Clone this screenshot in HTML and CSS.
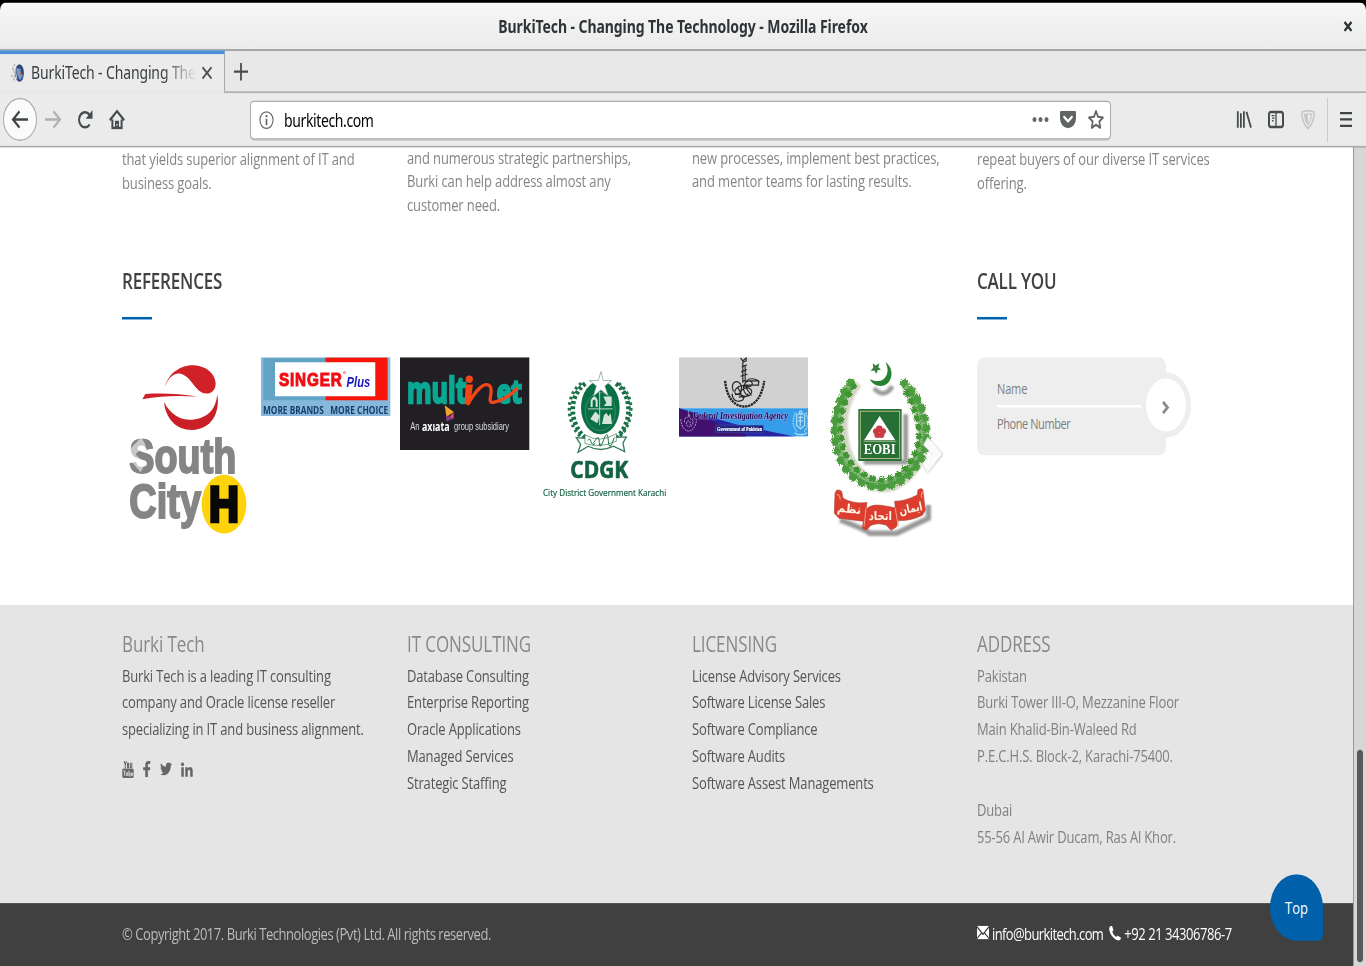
FILE: index.html
```html
<!DOCTYPE html>
<html lang="en">
<head>
<meta charset="utf-8">
<title>BurkiTech - Changing The Technology</title>
<link rel="stylesheet" href="styles.css">
</head>
<body>
<div class="screen">
  <header class="titlebar"><span class="window-title">BurkiTech - Changing The Technology - Mozilla Firefox</span>
    <svg class="window-close" width="10" height="10" viewBox="0 0 10 10"><path d="M1.500 1.500l7 7M8.500 1.500l-7 7" stroke="#2e3436" stroke-width="2.100"/></svg>
  </header>
  <div class="tabbar">
    <div class="tab">
      <svg class="favicon" width="16" height="16" viewBox="0 0 16 16"><path d="M5 1Q2 4 4 7T3 15M2 5l3 1M1 10l4 1" fill="none" stroke="#bbb" stroke-width="1.500" stroke-dasharray="2 1"/><ellipse cx="9.500" cy="8" rx="4.400" ry="7" fill="#34477d"/><path d="M7 4l4 1-1 3 3 2-3 4-3-5z" fill="#6d9bc7"/><path d="M10 7l2 1-2 2z" fill="#ba6e4d"/><path d="M6 4Q5 8 7 13" stroke="#c9ccd6" fill="none"/></svg>
      <span class="tab-label">BurkiTech - Changing The</span>
      <svg class="tab-close" width="12" height="12" viewBox="0 0 12 12"><path d="M1.500 1.500l9 9M10.500 1.500l-9 9" stroke="#4c5254" stroke-width="1.700"/></svg>
    </div>
    <svg class="new-tab" width="16" height="16" viewBox="0 0 16 16"><path d="M8 1v14M1 8h14" stroke="#454c4e" stroke-width="1.800"/></svg>
  </div>
  <div class="toolbar">
    <div class="nav">
      <span class="back"><svg width="18" height="16" viewBox="0 0 18 16"><path d="M17 8H2M8.500 1.500L2 8l6.500 6.500" fill="none" stroke="#3f4648" stroke-width="2"/></svg></span>
      <svg class="forward" width="18" height="16" viewBox="0 0 18 16"><path d="M1 8h15M9.500 1.500L16 8l-6.500 6.500" fill="none" stroke="#afb1b2" stroke-width="2"/></svg>
      <svg class="reload" width="16" height="16" viewBox="0 0 16 16"><path d="M12.700 12A6 6 0 1 1 12.700 4.500" fill="none" stroke="#464d4f" stroke-width="2"/><path d="M15.500 .5v7H8.800z" fill="#464d4f"/></svg>
      <svg class="home" width="16" height="16" viewBox="0 0 16 16"><path d="M.8 8.600L8 1.400l7.200 7.200M3.400 8v6.700h9.200V8" fill="none" stroke="#464d4f" stroke-width="2"/><path d="M6 15V9h4v6z" fill="#464d4f"/><path d="M8 11.500v1.500" stroke="#eee"/></svg>
    </div>
    <div class="urlbar">
      <svg width="15" height="15" viewBox="0 0 15 15"><circle cx="7.500" cy="7.500" r="6.600" fill="none" stroke="#666" stroke-width="1.100"/><path d="M7.500 6.500v5M7.500 3.500v1.800" stroke="#666" stroke-width="1.700"/></svg>
      <span class="url">burkitech.com</span>
      <svg class="dots" width="17" height="6" viewBox="0 0 17 6"><g fill="#666"><circle cx="2.500" cy="3" r="2"/><circle cx="8.500" cy="3" r="2"/><circle cx="14.500" cy="3" r="2"/></g></svg>
      <svg class="pocket" width="16" height="15" viewBox="0 0 16 15"><path d="M1.500 0h13Q16 0 16 1.500V6a8 8 0 0 1-16 0V1.500Q0 0 1.500 0z" fill="#626566"/><path d="M4.200 5L8 8.500 11.800 5" fill="none" stroke="#fff" stroke-width="2" stroke-linecap="round"/></svg>
      <svg class="star" width="16" height="16" viewBox="0 0 16 16"><path d="M8 1.300l2 4.500 5 .6-3.700 3.300 1 4.900L8 12.200l-4.300 2.400 1-4.900L1 6.400l5-.6z" fill="none" stroke="#626566" stroke-width="1.700" stroke-linejoin="round"/></svg>
    </div>
    <div class="tools">
      <svg width="16" height="16" viewBox="0 0 16 16"><path d="M1.800 1.500v13M4.900 3v11.500M7.900 1.500v13M10.500 2l4.500 12.500" fill="none" stroke="#464d4f" stroke-width="1.800"/></svg>
      <svg width="16" height="16" viewBox="0 0 16 16"><rect x="1" y="2" width="14" height="12" rx="2" fill="none" stroke="#464d4f" stroke-width="2"/><path d="M8 2v12" stroke="#464d4f" stroke-width="1.300"/><path d="M3.500 5h3M4 7h2.500M4 9h1.500" stroke="#464d4f"/></svg>
      <svg width="16" height="16" viewBox="0 0 16 16"><path d="M1.800 2.200Q8-.3 14.200 2.200 14.200 10.500 8 15.200 1.800 10.500 1.800 2.200z" fill="none" stroke="#c6c6c6" stroke-width="1.500"/><path d="M4.500 4Q8 3 11.500 4 11 9 8 12 5 9 4.500 4z" fill="#eee" stroke="#c6c6c6"/><path d="M8 4v7.500Q5 9 4.800 4.200z" fill="#c6c6c6"/></svg>
      <span class="divider"></span>
      <svg width="12" height="14" viewBox="0 0 12 14"><path d="M0 2h12M0 7h12M0 12h12" stroke="#3f4648" stroke-width="1.800"/></svg>
    </div>
  </div>
  <div class="viewport">
    <div class="page">
      <section class="row intro">
        <p>that yields superior alignment of IT and<br>business goals.</p>
        <p class="raised">and numerous strategic partnerships,<br>Burki can help address almost any<br>customer need.</p>
        <p class="raised">new processes, implement best practices,<br>and mentor teams for lasting results.</p>
        <p>repeat buyers of our diverse IT services<br>offering.</p>
      </section>
      <section class="row references">
        <div class="clients">
          <h3>REFERENCES</h3>
          <div class="logos">
            <svg style="height:146px" viewBox="36 37 388 551" preserveAspectRatio="none">
              <path d="M165 125C180 70 235 53 270 64c48 12 62 67 30 80-30 10-45-22-65-44-28-27-55-14-70 25z" fill="#d02028"/>
              <path d="M97 163l9-16c55-3 101-1 157 8-57-3-108-3-166 8z" fill="#d02028"/>
              <path d="M162 171c22 44 60 59 94 52 38-7 61-28 66-75 9 56-18 106-76 107-48 0-79-35-84-84z" fill="#c92028"/>
              <g fill="#858585" stroke="#858585" stroke-width="6" font-family="Liberation Sans, sans-serif" font-weight="bold" font-size="146"><text x="58" y="385" textLength="321" lengthAdjust="spacingAndGlyphs">South</text><text x="58" y="519" textLength="215" lengthAdjust="spacingAndGlyphs">City</text></g>
              <ellipse cx="342" cy="478" rx="67" ry="88" fill="#ffd20a"/>
              <path d="M301 421h27v41h28v-41h27v114h-27v-44h-28v44h-27z" fill="#080808"/>
              <path d="M94 277l13 24-31 27 29 29-13 25-47-54z" fill="#fff" fill-opacity=".55"/>
            </svg>
            <svg style="height:46.700px" viewBox="453 37 387 176" preserveAspectRatio="none">
              <path fill="#86b8dc" d="M453 37h387v176H453z"/><path fill="#61a3c5" d="M460 40h186v126H460z"/><path fill="#f7150b" d="M646 38h186v128H646z"/><path fill="#fff" d="M495 52h300v102H495z"/>
              <g font-family="Liberation Sans, sans-serif" font-weight="bold"><text x="507" y="122" font-size="54" fill="#f20c12" stroke="#f20c12" stroke-width="3" letter-spacing="3" textLength="190" lengthAdjust="spacingAndGlyphs">SINGER</text><text x="709" y="126" font-size="46" font-style="italic" fill="#1818bc" textLength="71" lengthAdjust="spacingAndGlyphs">Plus</text><g font-family="Open Sans, sans-serif" fill="#173d6b" font-size="34"><text x="459" y="206" textLength="182" lengthAdjust="spacingAndGlyphs">MORE BRANDS</text><text x="660" y="206" textLength="174" lengthAdjust="spacingAndGlyphs">MORE CHOICE</text></g></g><circle cx="703" cy="83" r="3" fill="none" stroke="#f20c12" stroke-width="2"/>
            </svg>
            <svg style="height:73.700px" viewBox="15 37 390 278" preserveAspectRatio="none">
              <path fill="#211f24" d="M15 37h390v278H15z"/>
              <g font-family="Open Sans, sans-serif" font-weight="bold"><g fill="#0aa894" stroke="#0aa894" stroke-width="7"><text x="36" y="175" font-size="109" textLength="180" lengthAdjust="spacingAndGlyphs">mult</text><text x="307" y="173" font-size="96" textLength="76" lengthAdjust="spacingAndGlyphs">et</text></g></g>
              <path d="M218 180C236 150 266 106 286 123c14 16-14 55 14 49 25-5 55-25 69-43" fill="none" stroke="#f14718" stroke-width="10"/><path d="M213 119h22l-8 59h-17z" fill="#f14718"/><circle cx="224" cy="103" r="11" fill="#f14718"/>
              <path d="M150 181l27 20-22 15z" fill="#efa52a"/><path d="M177 201v20l-23 7z" fill="#dc4777"/><path d="M154 211l23 10-22 8z" fill="#7b3a8d"/>
              <g fill="#fff"><text x="46" y="256" font-family="Liberation Sans, sans-serif" font-size="30" fill="#ddd" textLength="28" lengthAdjust="spacingAndGlyphs">An</text><text x="81" y="257" font-family="Open Sans, sans-serif" font-weight="bold" font-size="38" textLength="84" lengthAdjust="spacingAndGlyphs">axıata</text><text x="178" y="256" font-family="Liberation Sans, sans-serif" font-size="30" fill="#ddd" textLength="166" lengthAdjust="spacingAndGlyphs">group subsidiary</text></g>
            </svg>
            <svg style="height:117.400px" viewBox="432 37 388 443" preserveAspectRatio="none">
              <g fill="none" stroke="#167046" stroke-width="14" stroke-dasharray="9 7"><path d="M568 116C513 155 521 245 574 284M660 116C714 155 708 245 654 284"/></g>
              <g fill="none" stroke="#24734e" stroke-width="10" stroke-dasharray="8 9"><path d="M556 115C503 155 511 245 564 284M668 116C722 155 714 245 660 284"/></g>
              <ellipse cx="613" cy="188" rx="58" ry="80" fill="#087044"/><ellipse cx="613" cy="200" rx="45" ry="57" fill="none" stroke="#5a9679" stroke-width="2"/>
              <path d="M615 80l7 27h25l-20 16 10 31-22-19-23 19 9-31-21-16h27z" fill="#fff" stroke="#72957f" stroke-width="2"/>
              <path d="M611 141v100M576 192h74" stroke="#bdd4c6" stroke-width="3"/><path d="M584 186v-20q12-23 21 0v20h-6v-18q-5-9-9 0v18zM622 155h25v28h-24l8-9zM583 222l15-22 13 13-7 22zM624 210l8-6 5 10 7-8 4 31h-30z" fill="#d6e5dc"/>
              <path d="M541 278l35 3q38 19 77-3l38-2-10 19 5 25-34-16q-38 20-75 0l-31 18 8-23z" fill="#fff" stroke="#367d5b" stroke-width="4"/><path d="M567 270q46 27 94-4v23q-47 22-94 7z" fill="#fff" stroke="#367d5b" stroke-width="2"/><path d="M575 287q8-10 10 4t13-5 12 7 13-8 14 3 18-10M590 300l8-4m10 4l8-3" stroke="#247347" stroke-width="3" fill="none"/>
              <g fill="#156344" stroke="#156344" font-family="Open Sans, sans-serif"><text x="523" y="398" font-weight="bold" font-size="68" stroke-width="2" textLength="174" lengthAdjust="spacingAndGlyphs">CDGK</text><text x="441" y="454" font-size="29" stroke-width=".6" textLength="370" lengthAdjust="spacingAndGlyphs">City District Government Karachi</text></g>
            </svg>
            <svg style="height:63.300px" viewBox="27 37 387 239" preserveAspectRatio="none">
              <path fill="#d1d1d1" d="M27 37h387v153H27z"/><path fill="#349ce8" d="M27 190h387v86H27z"/><path d="M27 190l170 48 178 38H27z" fill="#2825a3"/><path d="M27 190l200 80v6H27z" fill="#42106d"/>
              <g fill="none" stroke="#272727"><path d="M165 108c4 45 25 77 57 77s54-31 60-77" stroke-width="7" stroke-dasharray="7 2"/><path d="M211 39l7 9 10-9v9l-10 4v62M225 60v50M215 66l15-6M213 81l17-7M211 94l21-6" stroke-width="3.500"/><path d="M190 140c-14-33 20-39 24-15 4 30-31 28-17 8 15-20 30-4 45-9 13-13-6-22-17-9-13 17 4 44 15 35 15-14-9-30-24-15-18 16 13 33 18 11M186 146c0 18 12 26 24 22 18-2 9-19-4-10M222 121h43v-13h-48M232 104c12-5 30-2 36 8M195 150c12-8 30 14 45 0M202 126l12 22M228 130l16 22" stroke-width="3.500"/></g>
              <g transform="translate(-27 141) scale(.37 .48)" stroke="#b9a4cf" fill="none" stroke-width="6"><path d="M160 170c4 45 30 75 64 75s60-30 64-75M190 190c0-55 40-10 38-50 0 45 35 20 30 55s-60 25-52 0 42-12 30 15M222 115v35" stroke-dasharray="14 5"/></g>
              <g fill="none" stroke="#a7dbf3" stroke-width="4"><path d="M375 203q-14 37 5 57M407 203q13 37-5 57" stroke-dasharray="5 3"/><path d="M379 208h24v34l-12 10-12-10zM373 264l9 5h18l10-5M384 218h14m-15 10h16m-9-16v32"/><circle cx="391" cy="202" r="4"/></g>
              <text x="68" y="222" font-family="Liberation Serif, serif" font-style="italic" font-weight="bold" font-size="31" fill="#1b0a55" stroke="#c8a9ec" stroke-width="2.200" paint-order="stroke" textLength="285" lengthAdjust="spacingAndGlyphs">Federal Investigation Agency</text><path d="M137 241h143v23H137z" fill="#21257d" stroke="#6b70d0"/><text x="141" y="259" font-family="Liberation Serif, serif" font-weight="bold" font-size="19" fill="#fff" stroke="#fff" stroke-width=".6" textLength="135" lengthAdjust="spacingAndGlyphs">Government of Pakistan</text>
            </svg>
            <svg style="height:146.600px" viewBox="444 37 388 553" preserveAspectRatio="none">
              <defs><filter id="leaf" x="-20%" y="-20%" width="140%" height="140%"><feTurbulence type="fractalNoise" baseFrequency=".28" numOctaves="2" seed="4"/><feDisplacementMap in="SourceGraphic" scale="14" xChannelSelector="R" yChannelSelector="G"/></filter><filter id="shade" x="-30%" y="-30%" width="160%" height="160%"><feGaussianBlur stdDeviation="3"/></filter></defs>
              <g filter="url(#shade)" fill="none"><path d="M560 112C491 200 503 342 586 402q67 53 136-22 78-99-6-250" stroke="#d3d3c6" stroke-width="36"/><path d="M612 130q31 33 55-6M581 352h126V208" stroke="#999" stroke-width="14"/><path d="M510 525q70 25 90 40h80l95-45v-40" stroke="#999" stroke-width="16"/></g>
              <g filter="url(#leaf)" fill="none" stroke-linecap="round"><path d="M544 117C486 190 482 325 556 386q70 63 143 8 85-71 50-190-13-48-42-84" stroke="#83b978" stroke-width="24"/><path d="M542 112C478 190 474 325 544 393q75 64 158 10 96-77 58-198-16-52-58-91" stroke="#4b9d3c" stroke-width="23" stroke-dasharray="2 29"/><path d="M551 124C496 200 496 320 564 376q65 54 129 7 79-69 43-179-12-38-34-74" stroke="#3f9431" stroke-width="18" stroke-dasharray="3 24"/><path d="M521 151C482 215 485 315 531 375q74 72 145 37 92-55 90-160-4-68-50-117" stroke="#4c9c40" stroke-width="12" stroke-dasharray="12 16"/></g>
              <path d="M646 51c32 22 20 72-14 72-19 0-29-12-32-20 42 20 65-18 46-52z" fill="#278132"/><path d="M608 55l9 7 11-7-3 12 8 7-10 2-4 11-6-10-11 1 8-10z" fill="#35803a"/>
              <path d="M565 192h130v156H565z" fill="#286f35"/><path d="M571 199h118v142H571z" fill="none" stroke="#aebc85" stroke-width="3"/><path d="M629 213l47 73h-94z" fill="#fff"/><path d="M580 290h100" stroke="#bdca9e" stroke-width="2"/><g fill="#c83c43"><circle cx="628" cy="252" r="10"/><circle cx="618" cy="259" r="9"/><circle cx="639" cy="259" r="9"/><circle cx="622" cy="270" r="9"/><circle cx="634" cy="270" r="9"/></g><text x="581" y="326" fill="#fff" font-family="Liberation Serif, serif" font-weight="bold" font-size="45" textLength="96" lengthAdjust="spacingAndGlyphs">EOBI</text>
              <path d="M495 447q3-19 20-8l4 21q31 18 72 13l-3 19q17-14 43-11t45 8l-2-20q32 0 68-19l2-15q17-12 16 13l6 48-9 15q-33 17-72 16l-6 19-16 10-14-15q-23-9-46 0l-14 15-12-6 3-21-73-9-14-15z" fill="#dc3d2e" stroke="#b04933" stroke-width="2"/><path d="M588 490l-6 55M676 490l9 55M500 448q12 3 10 16M763 440q-12 3-8 19" stroke="#f5a08a" stroke-width="3" fill="none"/>
              <g fill="#fff3df" font-family="DejaVu Sans, sans-serif" font-weight="bold" font-size="36"><text x="500" y="500" transform="rotate(6 500 500)" textLength="73" lengthAdjust="spacingAndGlyphs">نظم</text><text x="596" y="526" textLength="70" lengthAdjust="spacingAndGlyphs">اتحاد</text><text x="690" y="510" transform="rotate(-12 690 510)" textLength="71" lengthAdjust="spacingAndGlyphs">ایمان</text></g>
              <path d="M773 277l46 52-46 55-13-24 30-31-30-27z" fill="#aaa" filter="url(#shade)" opacity=".7"/><path d="M773 276l43 51-43 55-13-24 28-31-28-27z" fill="#fff" fill-opacity=".92"/>
            </svg>
          </div>
        </div>
        <div class="callback">
          <h3>CALL YOU</h3>
          <div class="call-form"><span class="field name">Name</span><span class="field phone-number">Phone Number</span><span class="submit"><svg width="8" height="13" viewBox="0 0 8 13"><path d="M1 2.500l4.500 4.500-4.500 4.500" fill="none" stroke="#8c8c8c" stroke-width="2.600"/></svg></span></div>
        </div>
      </section>
      <footer class="row footer">
        <div class="about"><h4>Burki Tech</h4><p>Burki Tech is a leading IT consulting<br>company and Oracle license reseller<br>specializing in IT and business alignment.</p>
          <div class="social">
            <svg width="12" height="14" viewBox="0 0 12 14"><rect x=".3" y="6" width="11.400" height="7.500" rx="1.300" fill="#666"/><path d="M2 0l1.300 3v2.500M4.500 0L3.300 3M5.500 2h1v3h-1zM8.300 1.500V5h1.500V1.500" fill="none" stroke="#666"/><path d="M1.500 8h2.200M2.600 8v4M4.500 9v2.500h1.200V9M7 7.500V12h1V9.500H7M9.500 9.500h1v2.200h-1z" fill="none" stroke="#e5e5e5" stroke-width=".7"/></svg>
            <svg width="8" height="13" viewBox="0 0 8 13"><path d="M7.300.1v2.100H6Q4.900 2.200 4.900 3.400V5h2.400L7 7.300H4.900V13H2.300V7.300H.2V5h2.100V3.200Q2.300 0 5.500 0z" fill="#666"/></svg>
            <svg width="12" height="11" viewBox="0 0 12 11"><path d="M12 1.400l-1.200 1.300Q11 6.500 8 9 4.500 11.500 0 9.300q2 .2 3.500-1-1.800-.3-2.200-1.700h1Q.6 5.800.5 4l1 .3Q-.1 2.700.9 1q2 2.400 5 2.600Q5.500.7 8 .2q1.200-.1 2 .7l1.400-.6-.9 1.400z" fill="#666"/></svg>
            <svg width="12" height="12" viewBox="0 0 12 12"><circle cx="1.500" cy="1.600" r="1.500" fill="#666"/><path d="M.3 4h2.500v7.500H.3zM4.300 4h2.400v1.100Q7.500 3.800 9 3.800q2.700 0 2.700 3.200v4.500H9.200V7.500q0-1.600-1.100-1.600Q6.800 5.900 6.800 7.500v4H4.300z" fill="#666"/></svg>
          </div>
        </div>
        <div class="links"><h4>IT CONSULTING</h4><p>Database Consulting<br>Enterprise Reporting<br>Oracle Applications<br>Managed Services<br>Strategic Staffing</p></div>
        <div class="links"><h4>LICENSING</h4><p>License Advisory Services<br>Software License Sales<br>Software Compliance<br>Software Audits<br>Software Assest Managements</p></div>
        <div class="address"><h4>ADDRESS</h4><p>Pakistan<br>Burki Tower III-O, Mezzanine Floor<br>Main Khalid-Bin-Waleed Rd<br>P.E.C.H.S. Block-2, Karachi-75400.<br><br>Dubai<br>55-56 Al Awir Ducam, Ras Al Khor.</p></div>
      </footer>
      <div class="bottom"><span class="copyright">© Copyright 2017. Burki Technologies (Pvt) Ltd. All rights reserved.</span>
        <span class="contact"><svg width="12" height="11" viewBox="0 0 12 11"><path d="M0 0h12L6 6zM0 1.500L4 5.500 0 9.300zM12 1.500L8 5.500l4 3.800zM0 10.800l4.700-4.500L6 7.500l1.300-1.200 4.700 4.500z" fill="#fff"/></svg><span class="mail">info@burkitech.com</span><svg class="phone" width="12" height="12" viewBox="0 0 12 12"><path d="M1 .5L3 0l1.500 3.500L3.200 4.800Q4.500 7.800 7.300 9l1.200-1.300L12 9.500l-.7 1.700Q9.500 12.500 6 10.500 1 7.500.2 3 0 1.200 1 .5z" fill="#fff"/></svg><span class="tel">+92 21 34306786-7</span></span>
      </div>
      <div class="top">Top</div>
    </div>
    <div class="scrollbar"><span></span></div>
  </div>
</div>
</body>
</html>
```
FILE: styles.css
```css
* { box-sizing: border-box; }
html, body { margin: 0; height: 966px; overflow: hidden; background: #000; }
/* A 1366 x 768 desktop, stretched to the height of the window. */
.screen { width: 1366px; height: 768px; display: flex; flex-direction: column; transform: scaleY(1.2578125); transform-origin: 0 0; font-family: "Open Sans", sans-serif; overflow: hidden; padding-top: 2px; }
svg { display: block; flex: none; }
.titlebar { height: 38px; flex: none; display: grid; grid-template-columns: 1fr auto 1fr; align-items: center; background: linear-gradient(#f7f7f7, #ebebeb); border-bottom: 1px solid #b2b2b2; border-radius: 6px 6px 0 0; }
.window-title { grid-column: 2; font: 700 14px/20px "Noto Sans", sans-serif; color: #2e3436; letter-spacing: -.07px; }
.window-close { justify-self: end; margin-right: 13px; }
.tabbar { height: 33px; flex: none; display: flex; background: #e8e8e8; }
.tab { width: 225px; border-top: 3px solid #4a90d9; border-right: 1px solid #aaa; background: #ebebeb; display: flex; align-items: center; padding: 0 11px 0 10px; }
.tab-label { width: 166px; margin-left: 5px; overflow: hidden; white-space: nowrap; font: 400 14px/20px "Noto Sans", sans-serif; color: #393f41; letter-spacing: -.13px; -webkit-mask-image: linear-gradient(90deg, #000 80%, transparent); mask-image: linear-gradient(90deg, #000 80%, transparent); }
.tab-close { margin-left: 4px; }
.new-tab { margin: 9px 0 0 8px; }
.toolbar { height: 44px; flex: none; padding-top: 1px; background: #ebebeb linear-gradient(#b0b0b0, #b0b0b0) 224px 0 / 1142px 1px no-repeat; border-bottom: 1px solid #a9a9a9; display: flex; align-items: center; }
.nav { width: 250px; padding-left: 3px; display: flex; align-items: center; }
.back { width: 34px; height: 34px; border: 1px solid #a8a8a8; border-radius: 50%; background: #fbfbfb; display: flex; align-items: center; justify-content: center; }
.forward { margin-left: 7px; }
.reload { margin-left: 15px; }
.home { margin-left: 16px; }
.urlbar { width: 861px; height: 31px; border: 1px solid #acacac; border-radius: 4px; background: #fff; box-shadow: 0 1px 0 #d2d2d2; display: flex; align-items: center; padding: 0 6px 0 8px; }
.url { margin-left: 10px; padding-top: 1px; font: 400 14px/20px "Noto Sans", sans-serif; letter-spacing: -.38px; color: #000; }
.dots { margin-left: auto; }
.pocket { margin-left: 11px; }
.star { margin-left: 12px; }
.tools { margin-left: 125px; display: flex; align-items: center; gap: 16px; }
.divider { width: 1px; height: 35px; background: #ccc; margin-left: -5px; margin-right: -4px; }
.viewport { flex: 1; min-height: 0; display: flex; }
.page { width: 1353px; background: #fff; position: relative; display: flex; flex-direction: column; }
.row { display: grid; grid-template-columns: 285px 285px 285px 285px; padding-left: 122px; }
p, h3, h4 { margin: 0; font-weight: 400; }
.intro { height: 95px; font-size: 13px; line-height: 19px; color: #858585; letter-spacing: -.12px; white-space: nowrap; }
.raised { margin-top: -1px; }
.references { height: 268.500px; }
.clients { grid-column: 1 / 4; }
h3 { font-size: 17px; line-height: 22px; padding-top: .5px; font-weight: 600; color: #414141; letter-spacing: -.2px; }
h3::after { content: ""; display: block; width: 30px; height: 2px; background: #0062ad; margin-top: 17px; }
.logos { margin-top: 30.500px; width: 825.500px; display: flex; justify-content: space-between; align-items: flex-start; }
.logos svg { width: 129.300px; }
.call-form { margin-top: 30.500px; width: 189px; height: 78px; border-radius: 7px; background: #eee; padding: 14px 25px 0 20px; display: flex; flex-direction: column; position: relative; font-size: 11px; color: #7d7d7d; }
.field { height: 27px; line-height: 20px; padding-top: 3px; letter-spacing: -.42px; }
.name { height: 26px; padding-top: 1px; border-bottom: 2px solid #fff; letter-spacing: -.15px; }
.submit { position: absolute; right: -25px; top: 12px; width: 50px; height: 52px; border: 5px solid #eee; border-radius: 50%; background: #fff; display: flex; align-items: center; justify-content: center; padding-top: 2px; }
.footer { height: 237px; background: #e5e5e5; padding-top: 19px; align-items: start; font-size: 13px; line-height: 21.400px; letter-spacing: -.16px; color: #555; white-space: nowrap; }
h4 { font-size: 17px; line-height: 23px; color: #888; letter-spacing: -.08px; margin-bottom: 4px; }
.address p { color: #808080; }
.social { display: flex; align-items: center; gap: 9px; margin-top: 14px; }
.bottom { flex: 1; background: #404040; padding: 0 0 2px 122px; display: flex; align-items: center; font-size: 13px; color: #bbb; letter-spacing: -.45px; white-space: nowrap; }
.copyright { width: 855px; }
.contact { display: flex; align-items: center; color: #fff; }
.mail { margin-left: 3px; letter-spacing: -.6px; }
.phone { margin: 0 3px 0 6px; }
.top { position: absolute; right: 30px; bottom: 20.500px; width: 53px; height: 53px; border-radius: 50% 50% 5px 50%; background: #0060aa; color: #fff; text-align: center; font-size: 13px; line-height: 55px; }
.scrollbar { width: 13px; background: #d6d6d6; border-left: 1px solid #999; padding: 479px 3px 3px; display: flex; }
.scrollbar span { width: 6px; background: #555b5c; border-radius: 3px; }
```
